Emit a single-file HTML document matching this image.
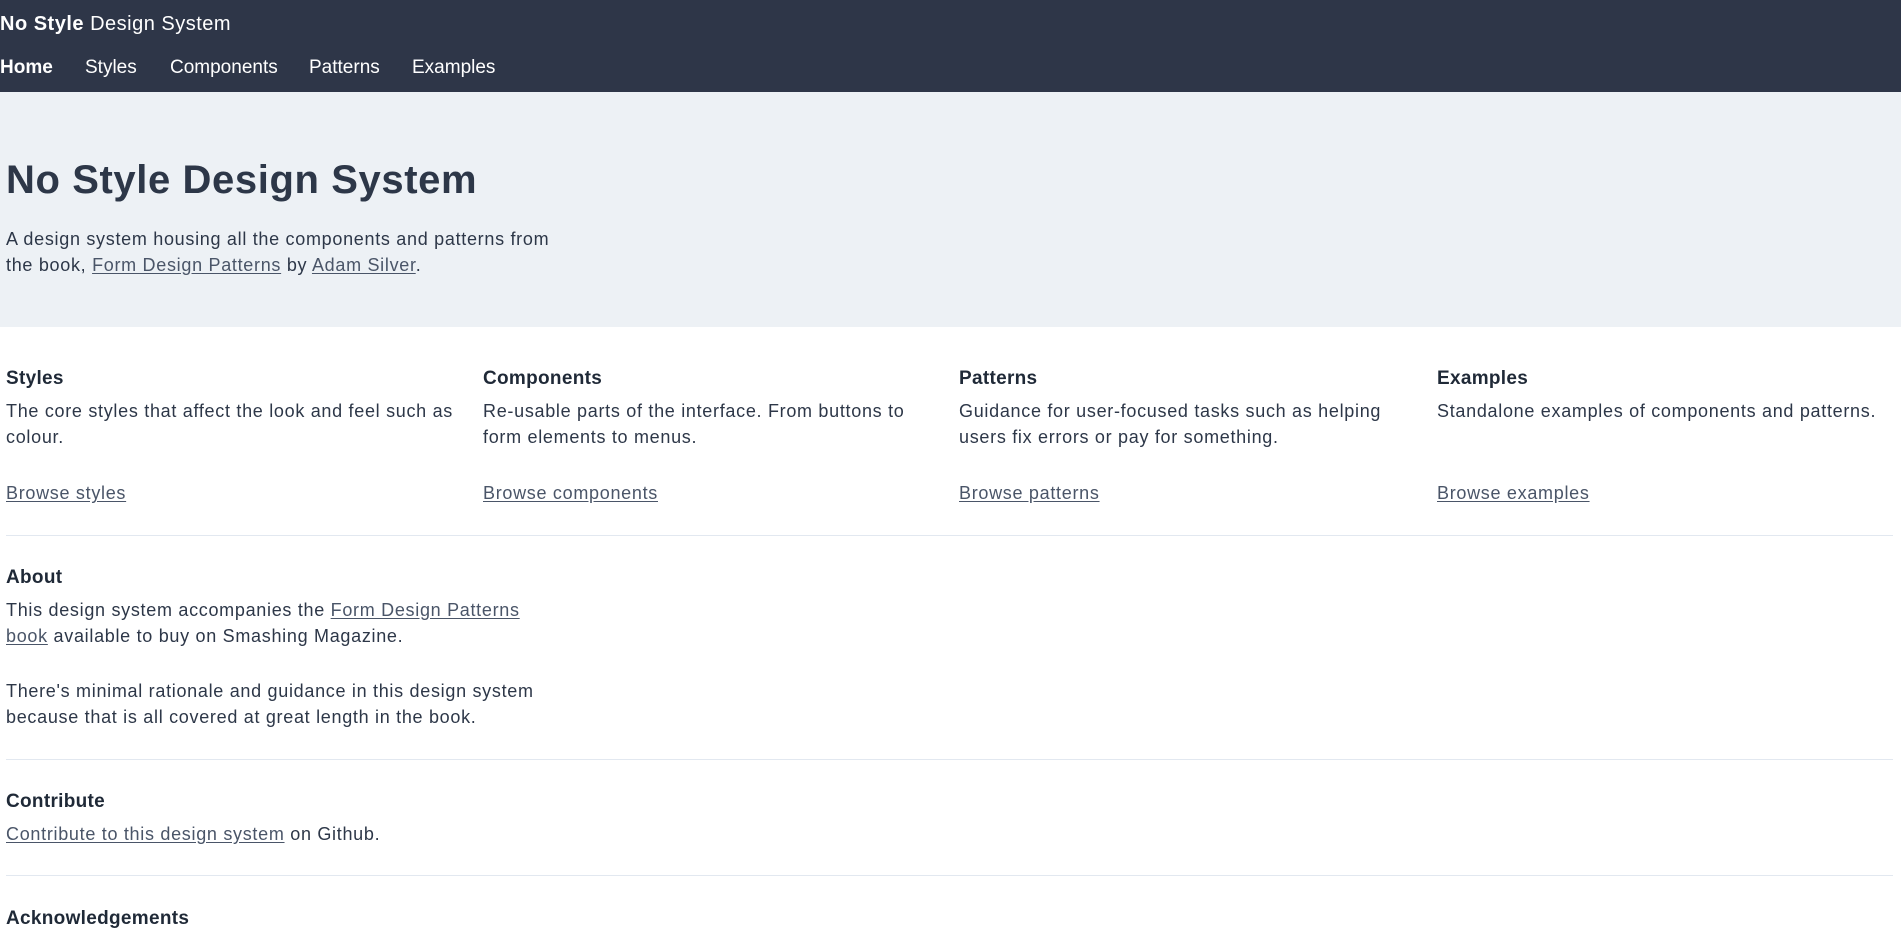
<!DOCTYPE html>
<html><head><meta charset="utf-8"><style>
*{margin:0;padding:0;box-sizing:border-box}
body{width:1901px;height:940px;overflow:hidden;background:#fff;font-family:"Liberation Sans",Arial,sans-serif;color:#2d3748;position:relative}
.a{position:absolute;white-space:nowrap}
a{color:#4a5568;text-decoration:underline;text-underline-offset:2px}
.hdr{position:absolute;left:0;top:0;width:1901px;height:92px;background:#2e3648}
.hero{position:absolute;left:0;top:92px;width:1901px;height:235px;background:#edf1f5}
.w{color:#fff;font-size:19px}
.p{font-size:18px;line-height:25.5px;letter-spacing:0.7px}
.h{font-size:19px;font-weight:bold;color:#1f2937;letter-spacing:0.3px}
.hr{position:absolute;left:6px;width:1887px;height:1px;background:#e2e8f0}
</style></head><body>
<div class="hdr"></div>
<div class="a w" style="left:0;top:13px;font-size:20px;letter-spacing:0.5px"><b>No Style</b> Design System</div>
<div class="a w" style="left:0;top:57px;font-weight:bold">Home</div>
<div class="a w" style="left:85px;top:57px">Styles</div>
<div class="a w" style="left:170px;top:57px">Components</div>
<div class="a w" style="left:309px;top:57px">Patterns</div>
<div class="a w" style="left:412px;top:57px">Examples</div>
<div class="hero"></div>
<div class="a" style="left:6px;top:158px;font-size:40px;font-weight:bold;color:#2d3748;letter-spacing:0.6px">No Style Design System</div>
<div class="a p" style="left:6px;top:227px">A design system housing all the components and patterns from<br>the book, <a>Form Design Patterns</a> by <a>Adam Silver</a>.</div>

<div class="a h" style="left:6px;top:368px">Styles</div>
<div class="a p" style="left:6px;top:399px">The core styles that affect the look and feel such as<br>colour.</div>
<div class="a p" style="left:6px;top:481px"><a>Browse styles</a></div>

<div class="a h" style="left:483px;top:368px">Components</div>
<div class="a p" style="left:483px;top:399px">Re-usable parts of the interface. From buttons to<br>form elements to menus.</div>
<div class="a p" style="left:483px;top:481px"><a>Browse components</a></div>

<div class="a h" style="left:959px;top:368px">Patterns</div>
<div class="a p" style="left:959px;top:399px">Guidance for user-focused tasks such as helping<br>users fix errors or pay for something.</div>
<div class="a p" style="left:959px;top:481px"><a>Browse patterns</a></div>

<div class="a h" style="left:1437px;top:368px">Examples</div>
<div class="a p" style="left:1437px;top:399px">Standalone examples of components and patterns.</div>
<div class="a p" style="left:1437px;top:481px"><a>Browse examples</a></div>

<div class="hr" style="top:535px"></div>
<div class="a h" style="left:6px;top:567px">About</div>
<div class="a p" style="left:6px;top:598px">This design system accompanies the <a>Form Design Patterns</a><br><a>book</a> available to buy on Smashing Magazine.</div>
<div class="a p" style="left:6px;top:679px">There's minimal rationale and guidance in this design system<br>because that is all covered at great length in the book.</div>
<div class="hr" style="top:759px"></div>
<div class="a h" style="left:6px;top:791px">Contribute</div>
<div class="a p" style="left:6px;top:822px"><a>Contribute to this design system</a> on Github.</div>
<div class="hr" style="top:875px"></div>
<div class="a h" style="left:6px;top:908px">Acknowledgements</div>
</body></html>
